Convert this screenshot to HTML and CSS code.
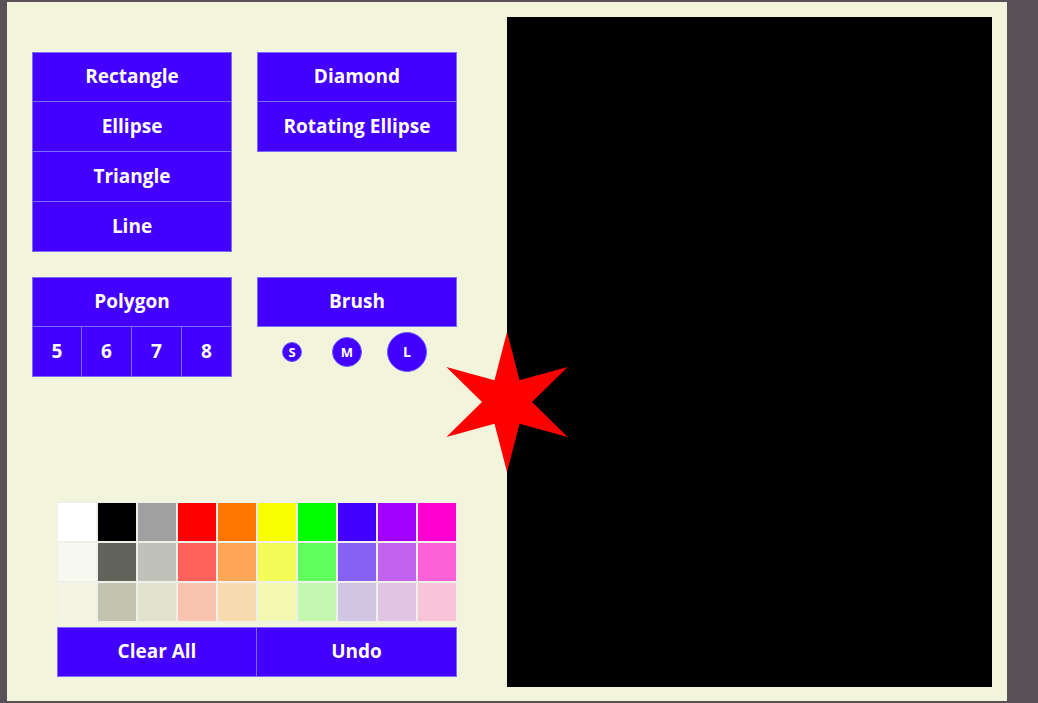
FILE: index.html
```html
<!DOCTYPE html>
<html>
<head>
<meta charset="utf-8">
<link rel="stylesheet" href="styles.css">
</head>
<body>
<div class="panel">
  <div class="controls">
    <div class="row row-shapes">
      <div class="col">
        <div class="btn">Rectangle</div>
        <div class="btn">Ellipse</div>
        <div class="btn">Triangle</div>
        <div class="btn">Line</div>
      </div>
      <div class="col">
        <div class="btn">Diamond</div>
        <div class="btn">Rotating Ellipse</div>
      </div>
    </div>
    <div class="row row-tools">
      <div class="col">
        <div class="btn">Polygon</div>
        <div class="sides">
          <div class="btn side">5</div>
          <div class="btn side">6</div>
          <div class="btn side">7</div>
          <div class="btn side">8</div>
        </div>
      </div>
      <div class="col">
        <div class="btn">Brush</div>
        <div class="sizes">
          <div class="dot dot-s">S</div>
          <div class="dot dot-m">M</div>
          <div class="dot dot-l">L</div>
        </div>
      </div>
    </div>
    <div class="bottom">
      <div class="palette">
        <div class="sw" style="background:#ffffff"></div>
        <div class="sw" style="background:#000000"></div>
        <div class="sw" style="background:#a0a0a0"></div>
        <div class="sw" style="background:#ff0000"></div>
        <div class="sw" style="background:#ff7700"></div>
        <div class="sw" style="background:#f8ff00"></div>
        <div class="sw" style="background:#00ff00"></div>
        <div class="sw" style="background:#4400ff"></div>
        <div class="sw" style="background:#a000ff"></div>
        <div class="sw" style="background:#ff00d0"></div>
        <div class="sw" style="background:#f7f8ef"></div>
        <div class="sw" style="background:#61625a"></div>
        <div class="sw" style="background:#c0c1b8"></div>
        <div class="sw" style="background:#ff615c"></div>
        <div class="sw" style="background:#ffa757"></div>
        <div class="sw" style="background:#f4fc57"></div>
        <div class="sw" style="background:#61ff5c"></div>
        <div class="sw" style="background:#8761f2"></div>
        <div class="sw" style="background:#c061ef"></div>
        <div class="sw" style="background:#ff61d8"></div>
        <div class="sw" style="background:#f3f4e2"></div>
        <div class="sw" style="background:#c3c4b0"></div>
        <div class="sw" style="background:#e2e3cf"></div>
        <div class="sw" style="background:#f8c4b0"></div>
        <div class="sw" style="background:#f8dcb0"></div>
        <div class="sw" style="background:#f3f8b0"></div>
        <div class="sw" style="background:#c4f8b0"></div>
        <div class="sw" style="background:#d0c6e4"></div>
        <div class="sw" style="background:#e0c4e2"></div>
        <div class="sw" style="background:#f8c4d8"></div>
      </div>
      <div class="actions">
        <div class="btn">Clear All</div>
        <div class="btn">Undo</div>
      </div>
    </div>
  </div>
  <div class="canvas"></div>
  <svg class="star" width="140" height="140" viewBox="-70 -70 140 140">
    <polygon fill="#ff0000" points="0,-70 12.5,-21.65 60.62,-35 25,0 60.62,35 12.5,21.65 0,70 -12.5,21.65 -60.62,35 -25,0 -60.62,-35 -12.5,-21.65"/>
  </svg>
</div>
</body>
</html>
```
FILE: styles.css
```css
html, body {
  margin: 0;
  padding: 0;
}
body {
  background: #5a5058;
  padding: 2px 0 0 7px;
  height: 701px;
  box-sizing: border-box;
  font-family: "Open Sans", "DejaVu Sans", sans-serif;
}
.panel {
  position: relative;
  width: 1000px;
  height: 700px;
  box-sizing: border-box;
  padding: 15px;
  background: #f2f4dc;
  display: flex;
}
.controls {
  width: 485px;
  padding: 35px 0 0 10px;
  box-sizing: border-box;
  display: flex;
  flex-direction: column;
}
.canvas {
  width: 485px;
  height: 670px;
  background: #000;
}
.row {
  display: flex;
  gap: 25px;
}
.row-tools {
  margin-top: 25px;
}
.col {
  width: 200px;
  display: flex;
  flex-direction: column;
}
.btn {
  box-sizing: border-box;
  height: 50px;
  background: #4400ff;
  border: 1px solid #7a6cff;
  color: #fff;
  font-weight: 700;
  font-size: 19px;
  line-height: 1;
  padding-bottom: 2px;
  display: flex;
  align-items: center;
  justify-content: center;
  flex: none;
}
.col > .btn + .btn,
.col > .btn + .sides .btn {
  border-top: 0;
  padding-top: 1px;
}
.sides {
  display: flex;
}
.sides .btn.side {
  width: 50px;
}
.sides .btn.side + .btn.side {
  border-left: 0;
}
.sizes {
  display: flex;
  align-items: center;
  height: 50px;
  padding-left: 25px;
}
.dot {
  box-sizing: border-box;
  border-radius: 50%;
  background: #4400ff;
  border: 1px solid #6a58ff;
  color: #fff;
  font-weight: 700;
  line-height: 1;
  display: flex;
  align-items: center;
  justify-content: center;
  flex: none;
}
.dot-s {
  width: 20px;
  height: 20px;
  font-size: 13px;
}
.dot-m {
  width: 30px;
  height: 30px;
  font-size: 13px;
  margin-left: 30px;
}
.dot-l {
  width: 40px;
  height: 40px;
  font-size: 14px;
  margin-left: 25px;
}
.bottom {
  margin-top: 125px;
  padding-left: 25px;
}
.palette {
  display: grid;
  grid-template-columns: repeat(10, 40px);
  grid-auto-rows: 40px;
  width: 400px;
}
.sw {
  box-sizing: border-box;
  border: 1px solid #f0f0ea;
}
.actions {
  display: flex;
  margin-top: 5px;
}
.actions .btn {
  width: 200px;
}
.actions .btn + .btn {
  border-left: 0;
}
.star {
  position: absolute;
  left: 430px;
  top: 330px;
}
```
